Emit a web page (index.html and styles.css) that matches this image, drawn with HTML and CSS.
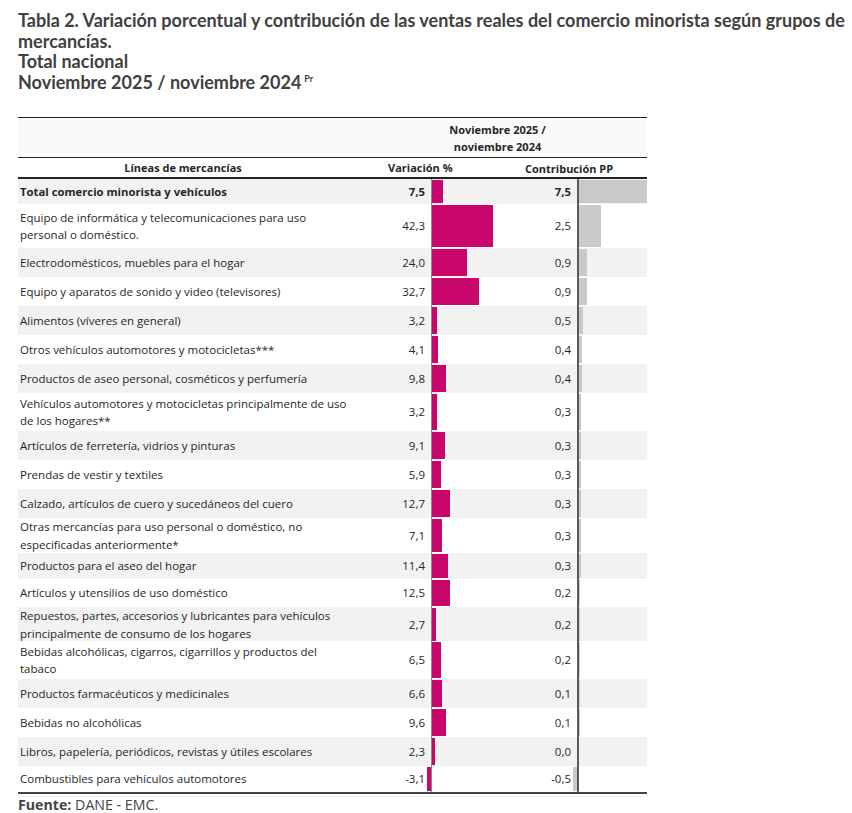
FILE: index.html
```html
<!DOCTYPE html>
<html lang="es">
<head>
<meta charset="utf-8">
<title>Tabla 2</title>
<link rel="stylesheet" href="styles.css">
</head>
<body>
<div class="page">
  <div class="title">
    <div class="tline">Tabla 2. Variación porcentual y contribución de las ventas reales del comercio minorista según grupos de</div>
    <div class="tline">mercancías.</div>
    <div class="tline">Total nacional</div>
    <div class="tline">Noviembre 2025 / noviembre 2024<sup class="pr">Pr</sup></div>
  </div>

  <div class="table">
    <div class="head1">
      <div class="hempty"></div>
      <div class="hperiod">Noviembre 2025 /<br>noviembre 2024</div>
    </div>
    <div class="head2">
      <div class="hlabel">Líneas de mercancías</div>
      <div class="hvar">Variación %</div>
      <div class="hcon">Contribución PP</div>
    </div>

    <div class="row odd bold r25">
      <div class="lab">Total comercio minorista y vehículos</div>
      <div class="val">7,5</div>
      <div class="bars"><div class="neg"></div><div class="axis"></div><div class="pos"><div class="bar mag" style="width:10.8px"></div></div></div>
      <div class="cval">7,5</div>
      <div class="bars"><div class="neg"></div><div class="axis dark"></div><div class="pos"><div class="bar gry" style="width:68px"></div></div></div>
    </div>
    <div class="row r44">
      <div class="lab">Equipo de informática y telecomunicaciones para uso<br>personal o doméstico.</div>
      <div class="val">42,3</div>
      <div class="bars"><div class="neg"></div><div class="axis"></div><div class="pos"><div class="bar mag" style="width:60.9px"></div></div></div>
      <div class="cval">2,5</div>
      <div class="bars"><div class="neg"></div><div class="axis dark"></div><div class="pos"><div class="bar gry" style="width:22.7px"></div></div></div>
    </div>
    <div class="row odd">
      <div class="lab">Electrodomésticos, muebles para el hogar</div>
      <div class="val">24,0</div>
      <div class="bars"><div class="neg"></div><div class="axis"></div><div class="pos"><div class="bar mag" style="width:34.6px"></div></div></div>
      <div class="cval">0,9</div>
      <div class="bars"><div class="neg"></div><div class="axis dark"></div><div class="pos"><div class="bar gry" style="width:8.2px"></div></div></div>
    </div>
    <div class="row">
      <div class="lab">Equipo y aparatos de sonido y video (televisores)</div>
      <div class="val">32,7</div>
      <div class="bars"><div class="neg"></div><div class="axis"></div><div class="pos"><div class="bar mag" style="width:47.1px"></div></div></div>
      <div class="cval">0,9</div>
      <div class="bars"><div class="neg"></div><div class="axis dark"></div><div class="pos"><div class="bar gry" style="width:8.2px"></div></div></div>
    </div>
    <div class="row odd">
      <div class="lab">Alimentos (víveres en general)</div>
      <div class="val">3,2</div>
      <div class="bars"><div class="neg"></div><div class="axis"></div><div class="pos"><div class="bar mag" style="width:4.6px"></div></div></div>
      <div class="cval">0,5</div>
      <div class="bars"><div class="neg"></div><div class="axis dark"></div><div class="pos"><div class="bar gry" style="width:4.5px"></div></div></div>
    </div>
    <div class="row">
      <div class="lab">Otros vehículos automotores y motocicletas***</div>
      <div class="val">4,1</div>
      <div class="bars"><div class="neg"></div><div class="axis"></div><div class="pos"><div class="bar mag" style="width:5.9px"></div></div></div>
      <div class="cval">0,4</div>
      <div class="bars"><div class="neg"></div><div class="axis dark"></div><div class="pos"><div class="bar gry" style="width:3.6px"></div></div></div>
    </div>
    <div class="row odd">
      <div class="lab">Productos de aseo personal, cosméticos y perfumería</div>
      <div class="val">9,8</div>
      <div class="bars"><div class="neg"></div><div class="axis"></div><div class="pos"><div class="bar mag" style="width:14.1px"></div></div></div>
      <div class="cval">0,4</div>
      <div class="bars"><div class="neg"></div><div class="axis dark"></div><div class="pos"><div class="bar gry" style="width:3.6px"></div></div></div>
    </div>
    <div class="row r38">
      <div class="lab">Vehículos automotores y motocicletas principalmente de uso<br>de los hogares**</div>
      <div class="val">3,2</div>
      <div class="bars"><div class="neg"></div><div class="axis"></div><div class="pos"><div class="bar mag" style="width:4.6px"></div></div></div>
      <div class="cval">0,3</div>
      <div class="bars"><div class="neg"></div><div class="axis dark"></div><div class="pos"><div class="bar gry" style="width:2.7px"></div></div></div>
    </div>
    <div class="row odd">
      <div class="lab">Artículos de ferretería, vidrios y pinturas</div>
      <div class="val">9,1</div>
      <div class="bars"><div class="neg"></div><div class="axis"></div><div class="pos"><div class="bar mag" style="width:13.1px"></div></div></div>
      <div class="cval">0,3</div>
      <div class="bars"><div class="neg"></div><div class="axis dark"></div><div class="pos"><div class="bar gry" style="width:2.7px"></div></div></div>
    </div>
    <div class="row">
      <div class="lab">Prendas de vestir y textiles</div>
      <div class="val">5,9</div>
      <div class="bars"><div class="neg"></div><div class="axis"></div><div class="pos"><div class="bar mag" style="width:8.5px"></div></div></div>
      <div class="cval">0,3</div>
      <div class="bars"><div class="neg"></div><div class="axis dark"></div><div class="pos"><div class="bar gry" style="width:2.7px"></div></div></div>
    </div>
    <div class="row odd">
      <div class="lab">Calzado, artículos de cuero y sucedáneos del cuero</div>
      <div class="val">12,7</div>
      <div class="bars"><div class="neg"></div><div class="axis"></div><div class="pos"><div class="bar mag" style="width:18.3px"></div></div></div>
      <div class="cval">0,3</div>
      <div class="bars"><div class="neg"></div><div class="axis dark"></div><div class="pos"><div class="bar gry" style="width:2.7px"></div></div></div>
    </div>
    <div class="row r35">
      <div class="lab">Otras mercancías para uso personal o doméstico, no<br>especificadas anteriormente*</div>
      <div class="val">7,1</div>
      <div class="bars"><div class="neg"></div><div class="axis"></div><div class="pos"><div class="bar mag" style="width:10.2px"></div></div></div>
      <div class="cval">0,3</div>
      <div class="bars"><div class="neg"></div><div class="axis dark"></div><div class="pos"><div class="bar gry" style="width:2.7px"></div></div></div>
    </div>
    <div class="row odd r26">
      <div class="lab">Productos para el aseo del hogar</div>
      <div class="val">11,4</div>
      <div class="bars"><div class="neg"></div><div class="axis"></div><div class="pos"><div class="bar mag" style="width:16.4px"></div></div></div>
      <div class="cval">0,3</div>
      <div class="bars"><div class="neg"></div><div class="axis dark"></div><div class="pos"><div class="bar gry" style="width:2.7px"></div></div></div>
    </div>
    <div class="row r28">
      <div class="lab">Artículos y utensilios de uso doméstico</div>
      <div class="val">12,5</div>
      <div class="bars"><div class="neg"></div><div class="axis"></div><div class="pos"><div class="bar mag" style="width:18px"></div></div></div>
      <div class="cval">0,2</div>
      <div class="bars"><div class="neg"></div><div class="axis dark"></div><div class="pos"><div class="bar gry" style="width:1.8px"></div></div></div>
    </div>
    <div class="row odd r34">
      <div class="lab">Repuestos, partes, accesorios y lubricantes para vehículos<br>principalmente de consumo de los hogares</div>
      <div class="val">2,7</div>
      <div class="bars"><div class="neg"></div><div class="axis"></div><div class="pos"><div class="bar mag" style="width:3.9px"></div></div></div>
      <div class="cval">0,2</div>
      <div class="bars"><div class="neg"></div><div class="axis dark"></div><div class="pos"><div class="bar gry" style="width:1.8px"></div></div></div>
    </div>
    <div class="row r38">
      <div class="lab">Bebidas alcohólicas, cigarros, cigarrillos y productos del<br>tabaco</div>
      <div class="val">6,5</div>
      <div class="bars"><div class="neg"></div><div class="axis"></div><div class="pos"><div class="bar mag" style="width:9.4px"></div></div></div>
      <div class="cval">0,2</div>
      <div class="bars"><div class="neg"></div><div class="axis dark"></div><div class="pos"><div class="bar gry" style="width:1.8px"></div></div></div>
    </div>
    <div class="row odd">
      <div class="lab">Productos farmacéuticos y medicinales</div>
      <div class="val">6,6</div>
      <div class="bars"><div class="neg"></div><div class="axis"></div><div class="pos"><div class="bar mag" style="width:9.5px"></div></div></div>
      <div class="cval">0,1</div>
      <div class="bars"><div class="neg"></div><div class="axis dark"></div><div class="pos"><div class="bar gry" style="width:0.9px"></div></div></div>
    </div>
    <div class="row">
      <div class="lab">Bebidas no alcohólicas</div>
      <div class="val">9,6</div>
      <div class="bars"><div class="neg"></div><div class="axis"></div><div class="pos"><div class="bar mag" style="width:13.8px"></div></div></div>
      <div class="cval">0,1</div>
      <div class="bars"><div class="neg"></div><div class="axis dark"></div><div class="pos"><div class="bar gry" style="width:0.9px"></div></div></div>
    </div>
    <div class="row odd">
      <div class="lab">Libros, papelería, periódicos, revistas y útiles escolares</div>
      <div class="val">2,3</div>
      <div class="bars"><div class="neg"></div><div class="axis"></div><div class="pos"><div class="bar mag" style="width:3.3px"></div></div></div>
      <div class="cval">0,0</div>
      <div class="bars"><div class="neg"></div><div class="axis dark"></div><div class="pos"></div></div>
    </div>
    <div class="row last">
      <div class="lab">Combustibles para vehículos automotores</div>
      <div class="val">-3,1</div>
      <div class="bars"><div class="neg"><div class="bar mag" style="width:4.5px"></div></div><div class="axis"></div><div class="pos"></div></div>
      <div class="cval">-0,5</div>
      <div class="bars"><div class="neg"><div class="bar gry" style="width:4.5px"></div></div><div class="axis dark"></div><div class="pos"></div></div>
    </div>
  </div>

  <div class="source"><b>Fuente:</b> DANE - EMC.</div>
</div>
</body>
</html>
```

FILE: styles.css
```css
* { box-sizing: border-box; }
html, body { margin: 0; padding: 0; background: #ffffff; }

.page {
  padding: 10px 0 0 18px;
  width: 852px;
  color: #262626;
}

.title {
  font-family: Lato, "Liberation Sans", sans-serif;
  font-weight: 700;
  font-size: 18px;
  line-height: 20.5px;
  color: #404040;
  white-space: nowrap;
}
.pr {
  font-size: 9px;
  vertical-align: 0;
  position: relative;
  top: -7px;
  margin-left: 3px;
  font-weight: 700;
}

.table {
  margin-top: 21px;
  width: 629px;
  font-family: "Open Sans", "Noto Sans", sans-serif;
  font-size: 11.5px;
  color: #262626;
}

.head1 {
  display: grid;
  grid-template-columns: 330px 299px;
  border-top: 1.5px solid #222;
  border-bottom: 1.5px solid #222;
  background: #fafafa;
  height: 41px;
}
.hperiod {
  text-align: center;
  font-weight: 700;
  font-size: 11px;
  line-height: 17px;
  padding-top: 3px;
}

.head2 {
  display: grid;
  grid-template-columns: 330px 152px 147px;
  border-bottom: 2px solid #222;
  height: 21px;
  font-weight: 700;
  font-size: 11px;
  line-height: 19px;
}
.hlabel { text-align: center; }
.hvar { padding-left: 40px; }
.hcon { padding-left: 25px; padding-top: 1px; }

.row {
  display: grid;
  grid-template-columns: 330px 79px 73px 72px 75px;
  height: 29px;
  background: #ffffff;
  line-height: 17.5px;
}
.row.odd { background: #f2f2f2; }
.row.r25 { height: 25px; }
.row.r26 { height: 26px; }
.row.r28 { height: 28px; }
.row.r34 { height: 34px; }
.row.r35 { height: 35px; }
.row.r38 { height: 38px; }
.row.r44 { height: 44px; }
.row.bold { font-weight: 700; font-size: 11.3px; }
.row.last { border-bottom: 2px solid #444; height: 28px; }

.lab {
  display: flex;
  align-items: center;
  padding-left: 2px;
}
.val, .cval {
  display: flex;
  align-items: center;
  justify-content: flex-end;
}
.val { padding-right: 2px; }
.cval { padding-right: 1px; }

.bars {
  display: flex;
  align-items: stretch;
}
.neg {
  width: 4px;
  display: flex;
  justify-content: flex-end;
  padding: 1px 0;
}
.bars + .cval + .bars .neg { width: 5px; }
.pos {
  flex: 1;
  display: flex;
  padding: 1px 0;
}
.axis {
  width: 1px;
  background: #8a8a8a;
}
.axis.dark { background: #5a5a5a; width: 1.5px; }

.bar { height: 100%; }
.bar.mag { background: #c8066b; }
.bar.gry { background: #c9c9c9; }

.source {
  margin-top: 2px;
  font-family: "Open Sans", "Noto Sans", sans-serif;
  font-size: 14.2px;
  line-height: 15px;
  color: #444;
  border-top: 1px solid #eeeeee;
  width: 629px;
}
.source b { font-weight: 700; }
```
